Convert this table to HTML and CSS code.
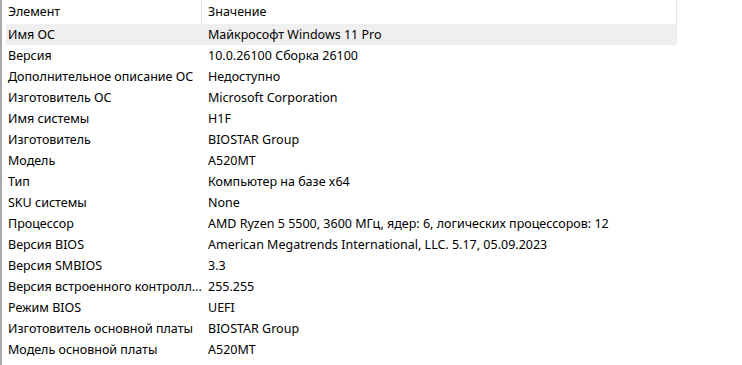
FILE: index.html
```html
<!DOCTYPE html>
<html lang="ru">
<head>
<meta charset="utf-8">
<link rel="stylesheet" href="styles.css">
</head>
<body>
<div class="list">
  <div class="header">
    <div class="hcell c1">Элемент</div>
    <div class="hcell c2">Значение</div>
  </div>
  <div class="rows">
    <div class="row selected"><div class="cell c1">Имя ОС</div><div class="cell c2">Майкрософт Windows 11 Pro</div></div>
    <div class="row"><div class="cell c1">Версия</div><div class="cell c2">10.0.26100 Сборка 26100</div></div>
    <div class="row"><div class="cell c1">Дополнительное описание ОС</div><div class="cell c2">Недоступно</div></div>
    <div class="row"><div class="cell c1">Изготовитель ОС</div><div class="cell c2">Microsoft Corporation</div></div>
    <div class="row"><div class="cell c1">Имя системы</div><div class="cell c2">H1F</div></div>
    <div class="row"><div class="cell c1">Изготовитель</div><div class="cell c2">BIOSTAR Group</div></div>
    <div class="row"><div class="cell c1">Модель</div><div class="cell c2">A520MT</div></div>
    <div class="row"><div class="cell c1">Тип</div><div class="cell c2">Компьютер на базе x64</div></div>
    <div class="row"><div class="cell c1">SKU системы</div><div class="cell c2">None</div></div>
    <div class="row"><div class="cell c1">Процессор</div><div class="cell c2">AMD Ryzen 5 5500, 3600 МГц, ядер: 6, логических процессоров: 12</div></div>
    <div class="row"><div class="cell c1">Версия BIOS</div><div class="cell c2">American Megatrends International, LLC. 5.17, 05.09.2023</div></div>
    <div class="row"><div class="cell c1">Версия SMBIOS</div><div class="cell c2">3.3</div></div>
    <div class="row"><div class="cell c1">Версия встроенного контролл...</div><div class="cell c2">255.255</div></div>
    <div class="row"><div class="cell c1">Режим BIOS</div><div class="cell c2">UEFI</div></div>
    <div class="row"><div class="cell c1">Изготовитель основной платы</div><div class="cell c2">BIOSTAR Group</div></div>
    <div class="row"><div class="cell c1">Модель основной платы</div><div class="cell c2">A520MT</div></div>
  </div>
</div>
</body>
</html>
```
FILE: styles.css
```css
html, body {
  margin: 0;
  padding: 0;
  background: #ffffff;
}
body {
  font-family: "Noto Sans", "Open Sans", sans-serif;
  font-size: 12.5px;
  color: #000000;
  width: 742px;
  height: 365px;
  overflow: hidden;
}
.list {
  border-left: 2px solid #a9a9a9;
  height: 365px;
  box-sizing: border-box;
}
.header {
  display: flex;
  height: 24px;
}
.hcell {
  height: 24px;
  line-height: 23px;
  box-sizing: border-box;
  padding-left: 6px;
  border-right: 1px solid #e5e5e5;
}
.hcell.c1 { width: 200px; }
.hcell.c2 { width: 475px; }
.rows {
  display: flex;
  flex-direction: column;
}
.row {
  display: flex;
  height: 21px;
  line-height: 21px;
  margin-left: 4px;
}
.row.selected {
  background: #efefef;
  width: 671px;
}
.cell {
  white-space: nowrap;
  box-sizing: border-box;
  padding-left: 2px;
}
.cell.c1 { width: 200px; }
```
